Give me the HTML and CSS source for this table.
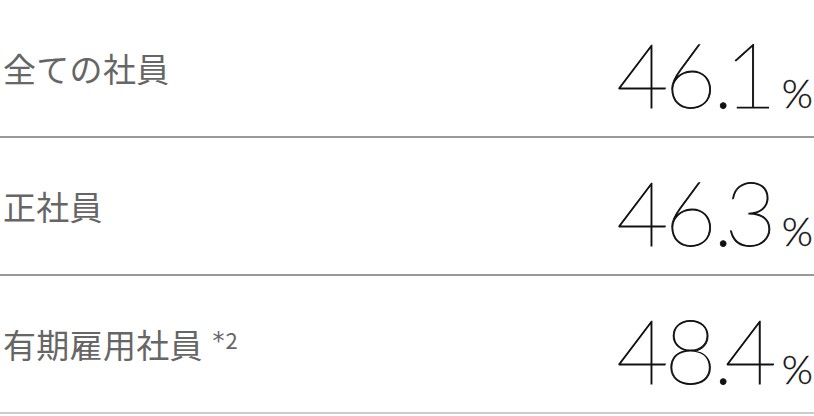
FILE: index.html
```html
<!DOCTYPE html>
<html lang="ja">
<head>
<meta charset="utf-8">
<link rel="stylesheet" href="styles.css">
</head>
<body>
<div class="list">
  <div class="row">
    <div class="label">全ての社員</div>
    <div class="value"><span class="num"><span class="int">46</span><span class="dot">.</span>1</span><span class="pct">%</span></div>
  </div>
  <div class="row">
    <div class="label">正社員</div>
    <div class="value"><span class="num"><span class="int">46</span><span class="dot">.</span>3</span><span class="pct">%</span></div>
  </div>
  <div class="row">
    <div class="label">有期雇用社員 <span class="note"><span class="ast">*</span>2</span></div>
    <div class="value"><span class="num"><span class="int">48</span><span class="dot">.</span>4</span><span class="pct">%</span></div>
  </div>
</div>
</body>
</html>
```
FILE: styles.css
```css
html, body { margin: 0; padding: 0; background: #fff; }
.list { width: 814px; }
.row {
  display: flex;
  align-items: center;
  justify-content: space-between;
  height: 136px;
  border-bottom: 2px solid #999;
  padding: 0 2px 0 3px;
  box-sizing: content-box;
}
.row:last-child { border-bottom-color: #ccc; }
.label {
  font-family: "Noto Sans CJK JP", sans-serif;
  font-size: 33px;
  color: #666;
  letter-spacing: 0.3px;
}
.note {
  font-size: 22px;
  letter-spacing: 0;
  vertical-align: 9px;
  margin-left: 2px;
}
.ast {
  font-family: "DejaVu Sans", sans-serif;
  font-size: 24px;
  margin-right: 1px;
}
.value {
  display: flex;
  align-items: baseline;
  color: #111;
  margin-top: 10px;
}
.num {
  font-family: "Lato", sans-serif;
  font-weight: 200;
  font-size: 90px;
  letter-spacing: -1px;
  -webkit-text-stroke: 0.9px #111;
}
.int { letter-spacing: -4px; }
.dot { letter-spacing: -9px; }
.pct {
  font-family: "Lato", sans-serif;
  font-weight: 300;
  font-size: 40px;
  margin-left: 6px;
  margin-right: -1px;
  -webkit-text-stroke: 0.3px #111;
}
```
